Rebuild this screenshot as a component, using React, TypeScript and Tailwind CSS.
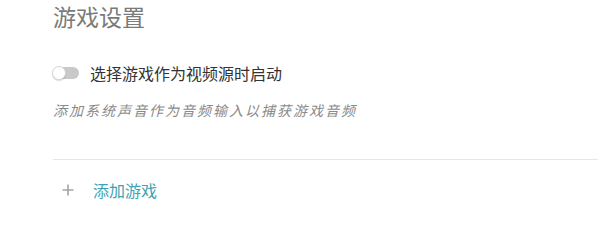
export default function App() {
  return (
    <div
      className="w-[600px] h-[225px] bg-white overflow-hidden pl-[53px]"
      style={{ fontFamily: '"Noto Sans CJK SC", "Noto Sans", sans-serif' }}
    >
      <h1 className="pt-[2px] text-[23px] leading-[28px] text-[#7a7a7a] font-normal">游戏设置</h1>

      <div className="mt-[33px] flex items-center h-[20px]">
        <div className="relative w-[26px] h-[12px] rounded-full bg-[#c9c9c9]">
          <div className="absolute -left-[1px] -top-[1px] w-[14px] h-[14px] rounded-full bg-white border border-[#d6d6d6] shadow-[0_1px_1px_rgba(0,0,0,0.15)]" />
        </div>
        <span className="ml-[11px] text-[16px] leading-[20px] text-[#333]">选择游戏作为视频源时启动</span>
      </div>

      <p className="mt-[17px] text-[14px] leading-[20px] italic tracking-[2px] text-[#8a8a8a]">
        添加系统声音作为音频输入以捕获游戏音频
      </p>

      <div className="mt-[39px] h-px bg-[#e6e6e6] mr-[2px]" />

      <div className="mt-[20px] flex items-center h-[20px]">
        <svg className="ml-[9px] w-[12px] h-[12px]" viewBox="0 0 12 12" fill="none" stroke="#a5a5a5" strokeWidth="1.6">
          <path d="M6 0.5v11M0.5 6h11" />
        </svg>
        <span className="ml-[19px] text-[16px] leading-[20px] text-[#3ea3b3]">添加游戏</span>
      </div>
    </div>
  );
}
